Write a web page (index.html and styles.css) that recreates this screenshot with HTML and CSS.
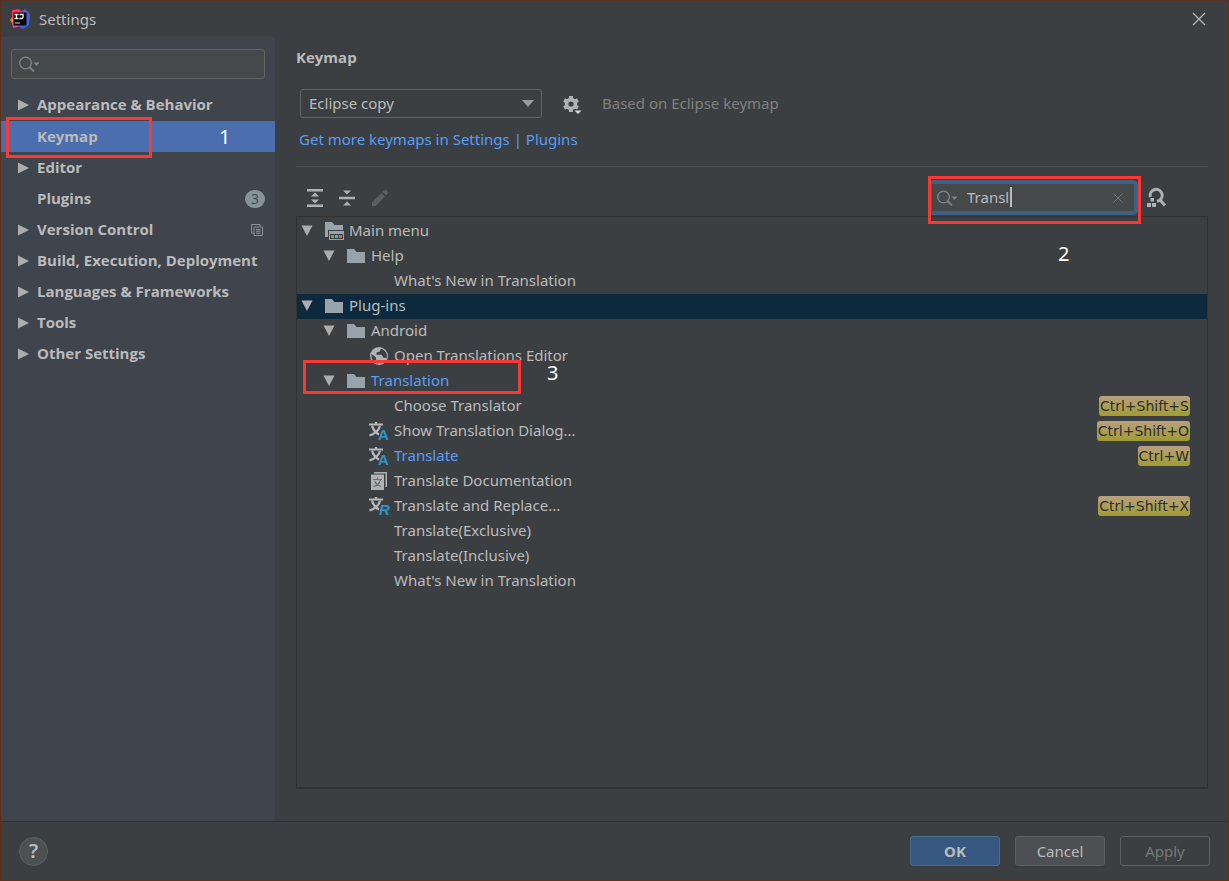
FILE: index.html
```html
<!DOCTYPE html>
<html lang="en">
<head>
<meta charset="utf-8">
<title>Settings</title>
<link rel="stylesheet" href="styles.css">
</head>
<body>
<svg class="defs" aria-hidden="true">
  <defs>
    <linearGradient id="logo-left" x1="0" y1="0" x2="0" y2="1"><stop offset="0" stop-color="#ff2d63"/><stop offset=".45" stop-color="#ff4b3a"/><stop offset=".6" stop-color="#fb8a1e"/><stop offset="1" stop-color="#d336c4"/></linearGradient>
    <linearGradient id="logo-right" x1="0" y1="0" x2="1" y2="1"><stop offset="0" stop-color="#2f86f5"/><stop offset=".5" stop-color="#5a55dd"/><stop offset="1" stop-color="#2377f0"/></linearGradient>
    <symbol id="right" viewBox="0 0 12 12"><path d="M0 0.5 11 6 0 11.5z" fill="#adadad"/></symbol>
    <symbol id="down" viewBox="0 0 12 12"><path d="M0.5 0.5h11L6 11z" fill="#adadad"/></symbol>
    <symbol id="folder" viewBox="0 0 20 20"><path d="M0 3h7l2.500 3H18v11H0z" fill="#97a4ae"/></symbol>
    <symbol id="menu-folder" viewBox="0 0 20 20"><path d="M0 1h7l2.500 3H18v5H3v7H0z" fill="#97a4ae"/><path d="M4 10h15v9H4z" fill="#97a4ae"/><path d="M5 13h13v5H5z" fill="#3a3d3f"/><path d="M6 14h3v3H6z" fill="#62b543"/><path d="M10 14h3v3h-3z" fill="#40b6e0"/><path d="M14 14h3v3h-3z" fill="#f26522"/></symbol>
    <symbol id="globe" viewBox="0 0 20 20"><circle cx="10" cy="10" r="9" fill="#b0b3b5"/><path d="M2.500 8 7 11.500v2l2.500 2v2.200C4.500 17 2 13 2.500 8zM12 2.800l-1.500 3-3 .7v2.300h5l2 3h2l1 1C19 8 16.500 4 12 2.800z" fill="#3c3f41"/></symbol>
    <symbol id="translate" viewBox="0 0 20 20"><path d="M0 3.500h14M7 1v3M3 5C4.500 9 7 12 10 13.500M11 5C9.500 10 5 13 .5 14.500" fill="none" stroke="#b8bbbd" stroke-width="2.200"/></symbol>
    <symbol id="search" viewBox="0 0 22 16"><circle cx="6.500" cy="7" r="5.800" fill="none" stroke="#7e868b" stroke-width="1.300"/><path d="m10.500 11 4.500 4.500" stroke="#7e868b" stroke-width="1.800"/><path d="M14.500 6.500h6l-3 3.500z" fill="#7e868b"/></symbol>
  </defs>
</svg>
<div class="window">
  <header class="titlebar">
    <svg class="logo" viewBox="0 0 20 20" aria-hidden="true">
      <path d="M2 1 9 0l3 3v14l-9 2-1-5-2-3 2-3z" fill="url(#logo-left)"/>
      <path d="m11 3 4-3 5 5-1 11-6 4-5-3z" fill="url(#logo-right)"/>
      <path d="M3.500 3.500h13V16.500h-13z" fill="#080808"/>
      <path d="M4.500 5.500h4M6.500 5.500v4M4.500 9.500h4M9.500 5.500H13v2.500q0 1.500-1.500 1.500h-2" fill="none" stroke="#fff" stroke-width="1.300"/>
      <path d="M5 14h5" stroke="#aaa" stroke-width="1.300"/>
    </svg>
    <h1 class="window-title">Settings</h1>
    <button class="icon-button close" aria-label="Close"><svg viewBox="0 0 14 14" width="14" height="14"><path d="m1 1 12 12M13 1 1 13" stroke="#b5b7b9" stroke-width="1.300"/></svg></button>
  </header>

  <div class="content">
    <aside class="sidebar">
      <label class="side-search"><svg class="search-icon"><use href="#search"/></svg><input class="field" type="text" aria-label="Search settings"></label>
      <nav>
        <ul class="pages">
          <li class="page"><svg class="twist"><use href="#right"/></svg><a class="page-link" href="#">Appearance &amp; Behavior</a></li>
          <li class="page selected"><span class="twist"></span><a class="page-link" href="#">Keymap</a><span class="mark mark-keymap"></span><span class="step step-one">1</span></li>
          <li class="page"><svg class="twist"><use href="#right"/></svg><a class="page-link" href="#">Editor</a></li>
          <li class="page"><span class="twist"></span><a class="page-link" href="#">Plugins</a><span class="count">3</span></li>
          <li class="page"><svg class="twist"><use href="#right"/></svg><a class="page-link" href="#">Version Control</a><svg class="project-icon" viewBox="0 0 12 12"><path d="M9 2.500V.5H.5V9h2M3 3h8.500v8.500H3zM5 5.500h4.500M5 7.300h4.500M5 9.200h4.500" fill="none" stroke="#87919a"/></svg></li>
          <li class="page"><svg class="twist"><use href="#right"/></svg><a class="page-link" href="#">Build, Execution, Deployment</a></li>
          <li class="page"><svg class="twist"><use href="#right"/></svg><a class="page-link" href="#">Languages &amp; Frameworks</a></li>
          <li class="page"><svg class="twist"><use href="#right"/></svg><a class="page-link" href="#">Tools</a></li>
          <li class="page"><svg class="twist"><use href="#right"/></svg><a class="page-link" href="#">Other Settings</a></li>
        </ul>
      </nav>
    </aside>

    <main class="main">
      <h2 class="heading">Keymap</h2>
      <div class="scheme">
        <div class="select-wrap">
          <select class="select" aria-label="Keymap scheme"><option>Eclipse copy</option></select>
          <svg class="select-arrow" viewBox="0 0 12 7"><path d="M0 0h12L6 7z" fill="#9a9da0"/></svg>
        </div>
        <button class="icon-button" aria-label="Scheme actions"><svg viewBox="0 0 20 20" width="20" height="20"><g fill="none" stroke="#afb1b3"><circle cx="9" cy="10" r="4.400" stroke-width="3.600"/><path d="M9 2v3M9 15v3M2.100 6l2.600 1.500M13.300 12.500l2.600 1.500M2.100 14l2.600-1.500M13.300 7.500 15.900 6" stroke-width="4"/></g><path d="M11 15.500H20V20h-6z" fill="#3c3f41"/><path d="M12.500 16.500h7L16 20z" fill="#d5d7d8"/></svg></button>
        <span class="hint">Based on Eclipse keymap</span>
      </div>
      <a class="more" href="#">Get more keymaps in Settings | Plugins</a>
      <div class="toolbar">
        <button class="icon-button" aria-label="Expand all"><svg viewBox="0 0 16 18" width="16" height="18"><path d="M0 0h16v2.500H0zM0 15.500h16V18H0zM8 3.500l4 4H4zM8 14.500l4-4H4z" fill="#afb1b3"/></svg></button>
        <button class="icon-button" aria-label="Collapse all"><svg viewBox="0 0 16 18" width="16" height="18"><path d="M0 7.800h16v2.400H0zM4 1.500h8l-4 4zM4 16.500h8l-4-4z" fill="#afb1b3"/></svg></button>
        <button class="icon-button" aria-label="Edit shortcut" disabled><svg viewBox="0 0 18 18" width="18" height="18"><path d="M1 13.500 10.500 4l3.500 3.500L4.500 17H1zM11.500 3l1.800-1.800q1-.9 2 0L16.800 2.700q.9 1 0 2L15 6.500z" fill="#5c5e60"/></svg></button>
        <div class="find">
          <svg class="search-icon"><use href="#search"/></svg>
          <input class="field focused" type="text" value="Transl" aria-label="Search actions">
          <span class="caret"></span>
          <button class="clear" aria-label="Clear"><svg viewBox="0 0 10 10" width="10" height="10"><path d="m.5.5 9 9M9.500.5l-9 9" stroke="#74787a"/></svg></button>
          <span class="mark mark-find"></span><span class="step step-two">2</span>
        </div>
        <button class="icon-button" aria-label="Find by shortcut"><svg viewBox="0 0 20 20" width="20" height="20"><path d="M3.400 9A6 6 0 1 1 13 12l5 5.500M13 12q-1 1-3 1.300" fill="none" stroke="#afb1b3" stroke-width="3"/><path d="M3.500 10h3.500v3.500H3.500zM0 15h4v4H0zM5 15h4v4H5z" fill="#afb1b3"/></svg></button>
      </div>

      <ul class="tree">
        <li class="row"><svg class="twist"><use href="#down"/></svg><svg class="icon"><use href="#menu-folder"/></svg><span class="label">Main menu</span></li>
        <li class="row level-one"><svg class="twist"><use href="#down"/></svg><svg class="icon"><use href="#folder"/></svg><span class="label">Help</span></li>
        <li class="row level-two"><span class="twist"></span><span class="icon"></span><span class="label">What's New in Translation</span></li>
        <li class="row selected"><svg class="twist"><use href="#down"/></svg><svg class="icon"><use href="#folder"/></svg><span class="label">Plug-ins</span></li>
        <li class="row level-one"><svg class="twist"><use href="#down"/></svg><svg class="icon"><use href="#folder"/></svg><span class="label">Android</span></li>
        <li class="row level-two"><span class="twist"></span><svg class="icon"><use href="#globe"/></svg><span class="label">Open Translations Editor</span></li>
        <li class="row level-one"><svg class="twist"><use href="#down"/></svg><svg class="icon"><use href="#folder"/></svg><span class="label changed">Translation</span><span class="mark mark-group"></span><span class="step step-three">3</span></li>
        <li class="row level-two"><span class="twist"></span><span class="icon"></span><span class="label">Choose Translator</span><kbd class="keys">Ctrl+Shift+S</kbd></li>
        <li class="row level-two"><span class="twist"></span><svg class="icon"><use href="#translate"/><text class="glyph" x="9" y="19">A</text></svg><span class="label">Show Translation Dialog...</span><kbd class="keys">Ctrl+Shift+O</kbd></li>
        <li class="row level-two"><span class="twist"></span><svg class="icon"><use href="#translate"/><text class="glyph" x="9" y="19">A</text></svg><span class="label changed">Translate</span><kbd class="keys">Ctrl+W</kbd></li>
        <li class="row level-two"><span class="twist"></span><svg class="icon" viewBox="0 0 20 20"><path d="M5 1h13v15h-1.500V2.500H5z" fill="#afb1b3"/><path d="M2 3.500h13V19H2z" fill="#afb1b3"/><path d="M4 8.500h9M8.500 6.500v2M5.500 10q2 4 6.500 5.500M11.500 9q-1.500 5-7 6.500" fill="none" stroke="#6e7072" stroke-width="1.200"/></svg><span class="label">Translate Documentation</span></li>
        <li class="row level-two"><span class="twist"></span><svg class="icon"><use href="#translate"/><text class="glyph slanted" x="10" y="19">R</text></svg><span class="label">Translate and Replace...</span><kbd class="keys">Ctrl+Shift+X</kbd></li>
        <li class="row level-two"><span class="twist"></span><span class="icon"></span><span class="label">Translate(Exclusive)</span></li>
        <li class="row level-two"><span class="twist"></span><span class="icon"></span><span class="label">Translate(Inclusive)</span></li>
        <li class="row level-two"><span class="twist"></span><span class="icon"></span><span class="label">What's New in Translation</span></li>
      </ul>
    </main>
  </div>

  <footer class="footer">
    <button class="help" aria-label="Help">?</button>
    <button class="button primary">OK</button>
    <button class="button">Cancel</button>
    <button class="button" disabled>Apply</button>
  </footer>
</div>
</body>
</html>
```
FILE: styles.css
```css
* { box-sizing: border-box; }

body {
  margin: 0;
  background: #3c3f41;
  color: #bbbbbb;
  font: 15px/20px "Noto Sans", "Open Sans", sans-serif;
}

ul { margin: 0; padding: 0; list-style: none; }
svg { display: block; flex: none; overflow: visible; }
button, input, select { font: inherit; color: inherit; }
.defs { position: absolute; width: 0; height: 0; }

.window {
  display: flex;
  flex-direction: column;
  min-height: 100vh;
  border: 1px solid #5a311c;
}

.titlebar {
  display: flex;
  align-items: center;
  gap: 9px;
  height: 36px;
  padding: 0 22px 0 9px;
}
.logo { width: 20px; height: 20px; }
.window-title { margin: 0; font-size: 15px; font-weight: 400; }
.icon-button { padding: 0; border: 0; background: none; }
.close { margin-left: auto; }

.content { display: flex; flex: 1; }

.sidebar { flex: none; width: 274px; padding-top: 12px; background: #40444d; }
.side-search { display: block; position: relative; margin: 0 10px 10px; }
.search-icon { position: absolute; left: 8px; top: 7px; width: 22px; height: 16px; }
.field {
  display: block;
  width: 100%;
  height: 30px;
  padding: 0 30px 0 38px;
  border: 1px solid #646464;
  border-radius: 3px;
  outline: 0;
  background: #45494a;
}

.page {
  display: flex;
  align-items: center;
  gap: 7px;
  position: relative;
  height: 31px;
  padding: 0 10px 0 17px;
  font-family: "Open Sans", "Noto Sans", sans-serif;
  font-weight: 700;
  white-space: nowrap;
}
.page.selected { margin-top: 1px; background: #4b6eaf; }
.page-link { padding-bottom: 2px; color: inherit; text-decoration: none; }
.twist { flex: none; width: 12px; height: 12px; }
.count {
  width: 20px;
  height: 18px;
  margin-left: auto;
  border-radius: 9px;
  background: #87939a;
  color: #40444d;
  font-size: 14px;
  font-weight: 400;
  line-height: 18px;
  text-align: center;
}
.project-icon { width: 12px; height: 12px; margin: 0 2px 0 auto; }

.main {
  display: flex;
  flex: 1;
  flex-direction: column;
  min-width: 0;
  padding: 10px 20px 32px 21px;
}
.heading {
  margin: 0 0 22px;
  font: 700 15px/20px "Open Sans", "Noto Sans", sans-serif;
}
.scheme { display: flex; align-items: center; gap: 20px; padding-left: 4px; }
.select-wrap { position: relative; width: 242px; }
.select {
  display: block;
  width: 100%;
  height: 29px;
  padding: 0 8px 2px;
  border: 1px solid #646464;
  border-radius: 3px;
  background: #3c3f41;
  appearance: none;
}
.select-arrow { position: absolute; right: 8px; top: 11px; width: 12px; height: 7px; pointer-events: none; }
.hint { padding-bottom: 2px; color: #808080; }
.more { margin: 11px 0 17px 3px; color: #589df6; text-decoration: none; }

.toolbar {
  display: flex;
  align-items: center;
  gap: 16px;
  height: 50px;
  padding: 13px 41px 0 11px;
  border-top: 1px solid #515151;
}
.find { position: relative; width: 210px; margin: 0 -7px 2px auto; }
.find .search-icon { left: 9px; top: 10px; }
.focused { height: 35px; border: 4px solid #3d6185; border-radius: 5px; padding: 0 30px 0 35px; }
.caret { position: absolute; left: 82px; top: 7px; width: 2px; height: 20px; background: #bbbbbb; }
.clear { position: absolute; right: 15px; top: 13px; padding: 0; border: 0; background: none; }

.tree {
  flex: 1;
  padding-top: 2px;
  border: 1px solid #323232;
  border-bottom-width: 2px;
}
.row {
  display: flex;
  align-items: center;
  position: relative;
  height: 25px;
  padding: 0 17px 2px 4px;
  white-space: nowrap;
}
.level-one { padding-left: 26px; }
.level-two { padding-left: 48px; }
.row.selected { background: #0d293e; }
.icon { flex: none; width: 20px; height: 20px; margin: 0 4px 0 12px; }
.level-two .icon { margin-right: 5px; }
.label { padding-bottom: 2px; }
.changed { color: #589df6; }
.glyph { fill: #3592c4; font: 700 15px "Liberation Sans", sans-serif; }
.slanted { font-style: italic; }
.keys {
  height: 20px;
  margin-left: auto;
  padding: 0 1px;
  border-radius: 3px;
  background: linear-gradient(#b9a07f, #a09c32);
  color: #2e2e2e;
  font: 14px/20px "DejaVu Sans", sans-serif;
}

.footer {
  display: flex;
  align-items: center;
  gap: 15px;
  height: 59px;
  padding: 0 18px;
  border-top: 1px solid #323232;
}
.help {
  width: 29px;
  height: 29px;
  margin-right: auto;
  padding: 0;
  border: 1px solid #5e6060;
  border-radius: 50%;
  background: #4c5052;
  font-size: 20px;
  font-weight: 600;
  line-height: 26px;
}
.button {
  width: 90px;
  height: 30px;
  padding: 0;
  border: 1px solid #5e6060;
  border-radius: 3px;
  background: #4c5052;
  box-shadow: 0 1px 1px #36383a;
}
.button.primary { border-color: #4c708c; background: #365880; font-weight: 700; }
.button:disabled { background: none; box-shadow: none; color: #777777; }

/* Walkthrough outlines and step numbers */
.mark { position: absolute; border: 3px solid #fc3835; pointer-events: none; }
.mark-keymap { left: 5px; top: -4px; width: 146px; height: 41px; }
.mark-find { left: 0; top: -4px; width: 213px; height: 48px; }
.mark-group { left: 6px; top: -9px; width: 218px; height: 34px; }
.step { position: absolute; color: #ffffff; font: 400 20px/24px "Noto Sans", sans-serif; }
.step-one { left: 218px; top: 4px; }
.step-two { left: 130px; top: 62px; }
.step-three { left: 250px; top: -8px; }
```
